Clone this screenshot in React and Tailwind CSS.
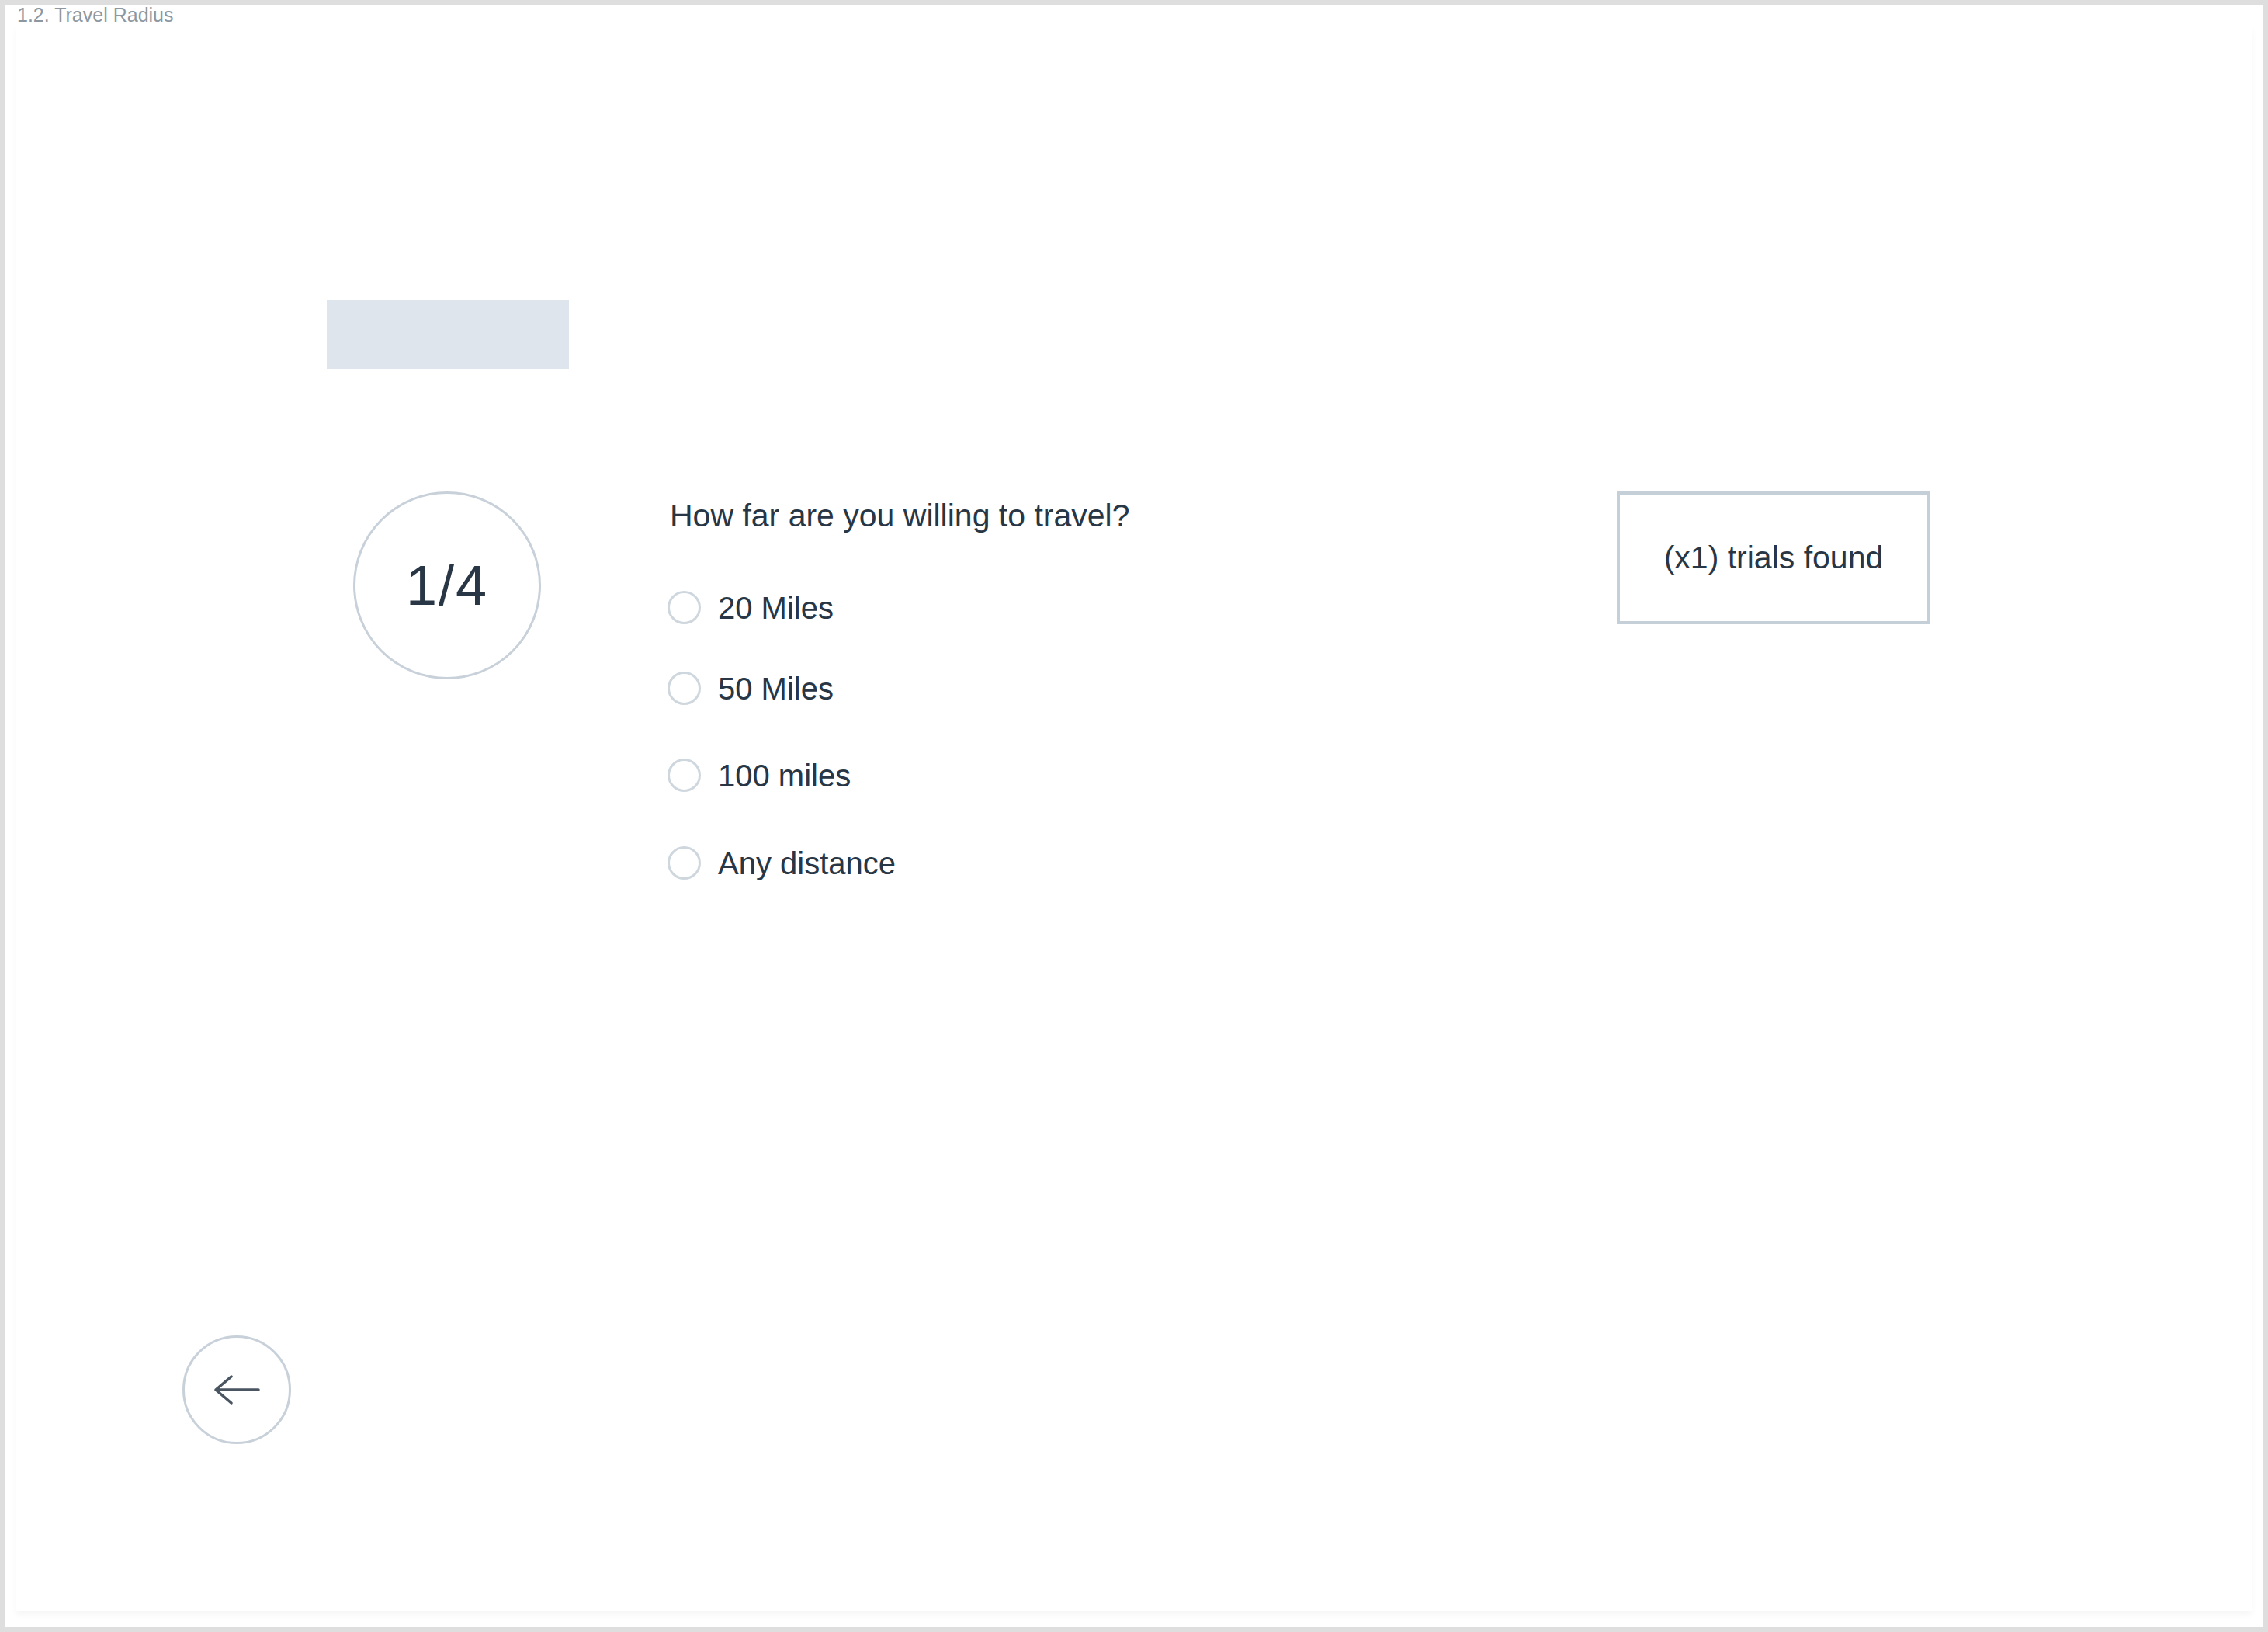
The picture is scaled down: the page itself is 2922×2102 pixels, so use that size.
import { useState } from "react";

const OPTIONS = [
  { key: "20", label: "20 Miles", gap: "mt-[73px]" },
  { key: "50", label: "50 Miles", gap: "mt-[61px]" },
  { key: "100", label: "100 miles", gap: "mt-[69px]" },
  { key: "any", label: "Any distance", gap: "mt-[70px]" },
];

function BackArrow() {
  return (
    <svg width="62" height="40" viewBox="0 0 62 40" fill="none">
      <path
        d="M59 20H4M24 3L4 20L24 37"
        stroke="#4a5562"
        strokeWidth="3.5"
        strokeLinecap="round"
        strokeLinejoin="round"
      />
    </svg>
  );
}

export default function App() {
  const [picked, setPicked] = useState(null);

  return (
    <div
      className="w-[2922px] h-[2102px] bg-[#dedede] p-[7px] text-[#283645]"
      style={{ fontFamily: '"Liberation Sans", Arial, sans-serif' }}
    >
      <div className="h-full bg-white flex flex-col">
        {/* frame title */}
        <div className="h-[25px] pt-[2px] pl-[15px] text-[25px] leading-[21px] text-[#8d97a1]">
          1.2. Travel Radius
        </div>

        {/* page */}
        <div className="flex-1 mx-[14px] mb-[20px] bg-white shadow-[0_5px_8px_rgba(0,0,0,0.04)] flex flex-col pt-[355px]">
          <div className="ml-[400px] w-[312px] h-[88px] bg-[#dfe5ec]" />

          <div className="mt-[158px] pl-[434px] flex items-start">
            <div className="w-[242px] h-[242px] shrink-0 rounded-full border-[3px] border-[#c8d1d9] flex items-center justify-center text-[72px] leading-none tracking-[2px]">
              1/4
            </div>

            <div className="ml-[163px] w-[1223px] shrink-0 flex flex-col">
              <div className="mt-[7px] text-[41px] leading-[48px] pl-[3px]">
                How far are you willing to travel?
              </div>
              {OPTIONS.map((o) => (
                <button
                  key={o.key}
                  onClick={() => setPicked(o.key)}
                  className={`${o.gap} h-[43px] flex items-center gap-[22px] text-left cursor-pointer`}
                >
                  <span className="w-[43px] h-[43px] rounded-full border-[3px] border-[#cfd7de] flex items-center justify-center">
                    {picked === o.key && <span className="w-[21px] h-[21px] rounded-full bg-[#283645]" />}
                  </span>
                  <span className="text-[40px] leading-[48px]">{o.label}</span>
                </button>
              ))}
            </div>

            <div className="w-[404px] h-[171px] shrink-0 border-[4px] border-[#c5cfd8] flex items-center justify-center text-[41px] leading-none">
              (x1) trials found
            </div>
          </div>

          <div className="flex-1" />

          <button className="ml-[214px] mb-[215px] w-[140px] h-[140px] rounded-full border-[3px] border-[#c8d1d9] flex items-center justify-center cursor-pointer">
            <BackArrow />
          </button>
        </div>
      </div>
    </div>
  );
}
